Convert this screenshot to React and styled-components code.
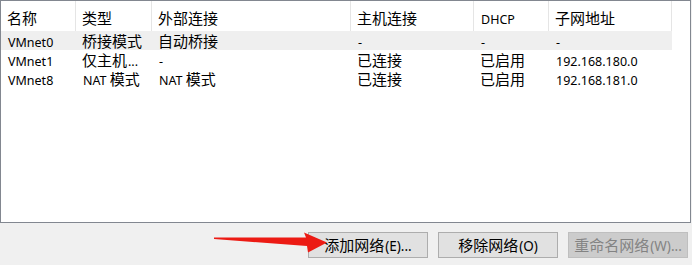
import styled, { createGlobalStyle } from 'styled-components';

const GlobalStyle = createGlobalStyle`
	html, body {
		margin: 0;
		padding: 0;
		background: #f0f0f0;
	}
	body {
		font-family: "Noto Sans CJK SC", "Noto Sans", sans-serif;
		color: #000;
	}
`;

const columns = [
	{ key: 'name', title: '名称', width: 75 },
	{ key: 'type', title: '类型', width: 76 },
	{ key: 'external', title: '外部连接', width: 199 },
	{ key: 'host', title: '主机连接', width: 123 },
	{ key: 'dhcp', title: 'DHCP', width: 75 },
	{ key: 'subnet', title: '子网地址', width: 123 },
];

const rows = [
	{ name: 'VMnet0', type: '桥接模式', external: '自动桥接', host: '-', dhcp: '-', subnet: '-', shaded: true },
	{ name: 'VMnet1', type: '仅主机...', external: '-', host: '已连接', dhcp: '已启用', subnet: '192.168.180.0' },
	{ name: 'VMnet8', type: 'NAT 模式', external: 'NAT 模式', host: '已连接', dhcp: '已启用', subnet: '192.168.181.0' },
];

const Window = styled.div`
	position: relative;
	width: 692px;
	height: 265px;
	display: flex;
	flex-direction: column;
	background: #f0f0f0;
`;

const ListBox = styled.div`
	box-sizing: border-box;
	width: 691px;
	height: 223px;
	border: 1px solid #828790;
	background: #fff;
	display: flex;
	flex-direction: column;
`;

const HeaderRow = styled.div`
	display: flex;
	height: 30px;
`;

const HeaderCell = styled.div`
	box-sizing: border-box;
	width: ${(p) => p.$width}px;
	padding-left: 6px;
	display: flex;
	align-items: center;
	padding-top: 3px;
	border-right: 1px solid #e5e5e5;
	font-size: 15px;
	line-height: 20px;
	white-space: pre;
`;

const Row = styled.div`
	display: flex;
	height: 19px;
	width: 671px;
	background: ${(p) => (p.$shaded ? '#efefef' : 'transparent')};
`;

const Cell = styled.div`
	box-sizing: border-box;
	width: ${(p) => p.$width}px;
	height: 19px;
	padding-left: 6px;
	display: flex;
	align-items: center;
	font-size: 15px;
	line-height: 19px;
	white-space: pre;
`;

const Latin = styled.span`
	font-family: "Noto Sans", sans-serif;
	font-size: ${(p) => p.$size || 12.5}px;
	line-height: 1;
	padding-left: 1px;
`;

const Footer = styled.div`
	display: flex;
	justify-content: flex-end;
	gap: 10px;
	padding: 9px 4px 0 0;
`;

const Button = styled.button`
	box-sizing: border-box;
	width: 120px;
	height: 26px;
	padding: 0;
	margin: 0;
	border: 1px solid ${(p) => (p.disabled ? '#bfbfbf' : '#adadad')};
	background: ${(p) => (p.disabled ? '#cccccc' : '#e1e1e1')};
	color: ${(p) => (p.disabled ? '#838383' : '#000')};
	font-family: "Noto Sans CJK SC", "Noto Sans", sans-serif;
	font-size: 15px;
	line-height: 20px;
	white-space: pre;
	display: flex;
	align-items: center;
	justify-content: center;
`;

const ArrowLayer = styled.svg`
	position: absolute;
	left: 0;
	top: 0;
	pointer-events: none;
`;

// split text into ascii and cjk runs so latin gets the smaller face
const MixedText = ({ text, latinSize }) => {
	const parts = text.match(/[\x00-\x7f]+|[^\x00-\x7f]+/g) || [];
	return (
		<span>
			{parts.map((part, i) =>
				/^[\x00-\x7f]+$/.test(part) ? (
					<Latin key={i} $size={latinSize}>
						{part}
					</Latin>
				) : (
					<span key={i}>{part}</span>
				),
			)}
		</span>
	);
};

export default function App() {
	return (
		<>
			<GlobalStyle />
			<Window>
				<ListBox>
					<HeaderRow>
						{columns.map((col) => (
							<HeaderCell key={col.key} $width={col.width}>
								<MixedText text={col.title} />
							</HeaderCell>
						))}
					</HeaderRow>
					{rows.map((row) => (
						<Row key={row.name} $shaded={row.shaded}>
							{columns.map((col) => (
								<Cell key={col.key} $width={col.width}>
									<MixedText text={row[col.key]} />
								</Cell>
							))}
						</Row>
					))}
				</ListBox>
				<Footer>
					<Button>
						<MixedText text="添加网络(E)..." latinSize={13.5} />
					</Button>
					<Button>
						<MixedText text="移除网络(O)" latinSize={13.5} />
					</Button>
					<Button disabled>
						<MixedText text="重命名网络(W)..." latinSize={13.5} />
					</Button>
				</Footer>
				<ArrowLayer width="692" height="265" viewBox="0 0 692 265">
					<polygon
						points="214,237.5 306,237.5 304,232.5 327,242.5 308,252.5 307,246 214,239"
						fill="#ec1b14"
					/>
				</ArrowLayer>
			</Window>
		</>
	);
}
